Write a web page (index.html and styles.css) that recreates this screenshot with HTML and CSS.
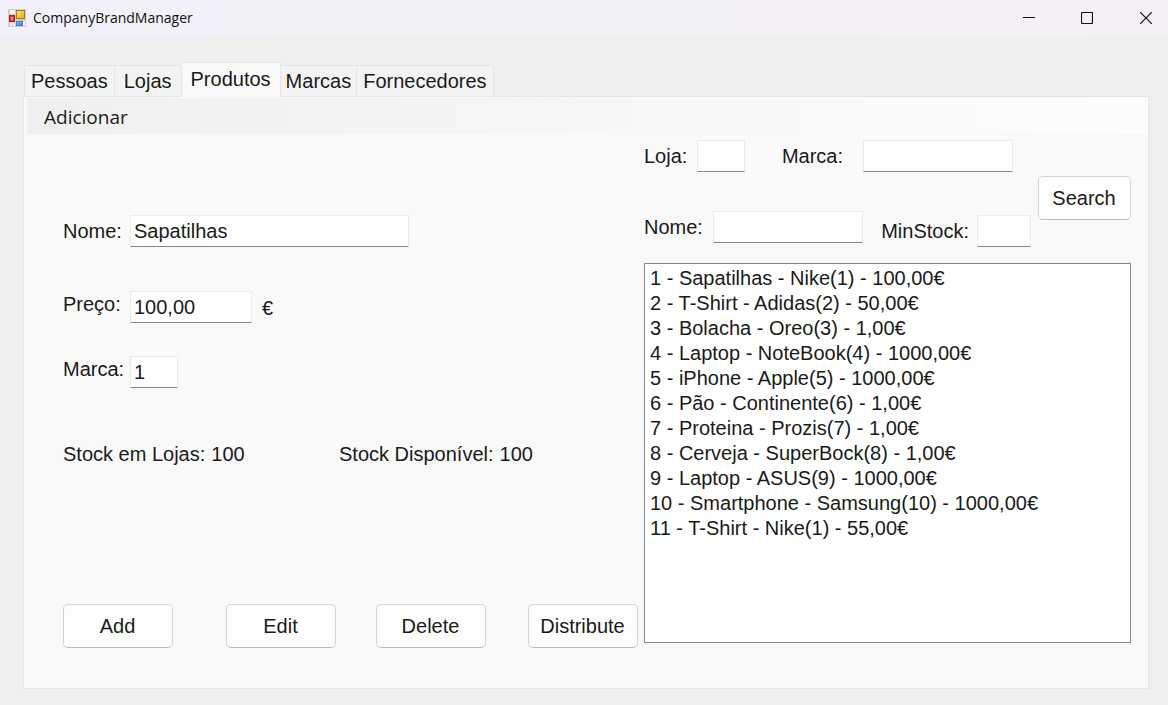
FILE: index.html
```html
<!DOCTYPE html>
<html lang="pt">
<head>
<meta charset="utf-8">
<title>CompanyBrandManager</title>
<link rel="stylesheet" href="styles.css">
</head>
<body>
<header class="titlebar">
  <svg class="app-icon" width="18" height="18" viewBox="0 0 18 18" aria-hidden="true">
    <defs>
      <linearGradient id="gold" x1="0" y1="0" x2="1" y2="1"><stop offset="0" stop-color="#ffe98a"/><stop offset="1" stop-color="#e9a800"/></linearGradient>
      <linearGradient id="blue" x1="0" y1="0" x2="1" y2="1"><stop offset="0" stop-color="#8dbcff"/><stop offset="1" stop-color="#3a74d8"/></linearGradient>
    </defs>
    <rect width="18" height="18" fill="#cfcdd0"/>
    <rect x="2" y="1" width="5" height="4" fill="#f4f4f6"/>
    <rect x="2" y="14" width="2" height="3" fill="#f4f4f6"/>
    <rect x="5" y="14" width="2" height="3" fill="#f4f4f6"/>
    <rect x="15" y="12" width="2" height="5" fill="#f4f4f6"/>
    <rect x="8.500" y="1.500" width="8" height="8" fill="url(#gold)" stroke="#b07a10"/>
    <rect x="1.500" y="6.500" width="5" height="6" fill="#d03a30" stroke="#a02a22"/>
    <rect x="3" y="8" width="2" height="3" fill="#e98a80"/>
    <rect x="8.500" y="12.500" width="6" height="4" fill="url(#blue)" stroke="#4a7cd0"/>
  </svg>
  <h1 class="titlebar-text">CompanyBrandManager</h1>
  <div class="window-controls">
    <button class="window-button" aria-label="Minimize"><svg width="12" height="12" viewBox="0 0 12 12"><path d="M0 5.500H12" stroke="#111"/></svg></button>
    <button class="window-button" aria-label="Maximize"><svg width="12" height="12" viewBox="0 0 12 12"><rect x=".5" y=".5" width="11" height="11" rx="1" fill="none" stroke="#111" stroke-width="1.200"/></svg></button>
    <button class="window-button" aria-label="Close"><svg width="12" height="12" viewBox="0 0 12 12"><path d="M0 0L12 12M12 0L0 12" stroke="#111" stroke-width="1.200"/></svg></button>
  </div>
</header>
<main class="content">
  <nav class="tabs" role="tablist">
    <button class="tab" role="tab">Pessoas</button>
    <button class="tab tab-wide" role="tab">Lojas</button>
    <button class="tab tab-wide tab-selected" role="tab" aria-selected="true">Produtos</button>
    <button class="tab tab-compact" role="tab">Marcas</button>
    <button class="tab" role="tab">Fornecedores</button>
  </nav>
  <section class="panel" role="tabpanel">
    <div class="menubar"><button class="menu-item">Adicionar</button></div>
    <div class="workspace">
      <form class="product">
        <div class="field field-name">
          <label for="name">Nome:</label>
          <input class="box box-long" id="name" value="Sapatilhas">
        </div>
        <div class="field field-price">
          <label for="price">Preço:</label>
          <input class="box box-medium" id="price" value="100,00">
          <span class="unit">€</span>
        </div>
        <div class="field field-brand">
          <label for="brand">Marca:</label>
          <input class="box box-short" id="brand" value="1">
        </div>
        <div class="stock">
          <p class="stock-item"><span>Stock em Lojas:</span><output>100</output></p>
          <p class="stock-item"><span>Stock Disponível:</span><output>100</output></p>
        </div>
        <div class="actions">
          <button type="button" class="button">Add</button>
          <button type="button" class="button">Edit</button>
          <button type="button" class="button">Delete</button>
          <button type="button" class="button">Distribute</button>
        </div>
      </form>
      <section class="catalog">
        <form class="search">
          <div class="filters">
            <div class="filter-row">
              <div class="filter"><label for="f-store">Loja:</label><input class="box box-short" id="f-store"></div>
              <div class="filter filter-brand"><label for="f-brand">Marca:</label><input class="box box-filter" id="f-brand"></div>
            </div>
            <div class="filter-row filter-row-second">
              <div class="filter"><label for="f-name">Nome:</label><input class="box box-filter" id="f-name"></div>
              <div class="filter filter-stock"><label for="f-stock">MinStock:</label><input class="box box-stock" id="f-stock"></div>
            </div>
          </div>
          <button type="button" class="button button-search">Search</button>
        </form>
        <select class="list" size="14" aria-label="Produtos">
          <option>1 - Sapatilhas - Nike(1) - 100,00€</option>
          <option>2 - T-Shirt - Adidas(2) - 50,00€</option>
          <option>3 - Bolacha - Oreo(3) - 1,00€</option>
          <option>4 - Laptop - NoteBook(4) - 1000,00€</option>
          <option>5 - iPhone - Apple(5) - 1000,00€</option>
          <option>6 - Pão - Continente(6) - 1,00€</option>
          <option>7 - Proteina - Prozis(7) - 1,00€</option>
          <option>8 - Cerveja - SuperBock(8) - 1,00€</option>
          <option>9 - Laptop - ASUS(9) - 1000,00€</option>
          <option>10 - Smartphone - Samsung(10) - 1000,00€</option>
          <option>11 - T-Shirt - Nike(1) - 55,00€</option>
        </select>
      </section>
    </div>
  </section>
</main>
</body>
</html>
```
FILE: styles.css
```css
* {
  box-sizing: border-box;
}

body {
  margin: 0;
  min-height: 100vh;
  display: flex;
  flex-direction: column;
  background: #efefef;
  color: #1a1a1a;
  font: 20px/26px "Liberation Sans", Arial, sans-serif;
}

button,
input,
select {
  font: inherit;
  color: inherit;
  margin: 0;
}

p {
  margin: 0;
}

.titlebar {
  display: flex;
  align-items: center;
  height: 37px;
  padding: 0 0 2px 8px;
  background: linear-gradient(90deg, #f2f0f8, #f4f0f8 60%, #f7eff7);
}

.app-icon {
  margin-right: 7px;
}

.titlebar-text {
  margin: 0;
  font: 14px/20px "Open Sans", "Noto Sans", sans-serif;
  color: #111;
}

.window-controls {
  display: flex;
  margin-left: auto;
}

.window-button {
  display: flex;
  align-items: center;
  justify-content: center;
  width: 58px;
  height: 34px;
  padding: 0;
  border: 0;
  background: none;
}

.window-button:last-child {
  width: 44px;
  margin-left: 8px;
}

.content {
  flex: 1;
  display: flex;
  flex-direction: column;
  padding: 25px 19px 16px 23px;
}

.tabs {
  display: flex;
  align-items: flex-end;
  padding-left: 1px;
  height: 34px;
}

.tab {
  height: 31px;
  padding: 0 6px;
  border: 1px solid #e5e5e5;
  border-width: 1px 1px 0 0;
  background: #f3f3f3;
}

.tab:first-child {
  border-left-width: 1px;
}

.tab-wide {
  padding: 0 9px;
}

.tab-compact {
  padding: 0 5px;
}

.tab-selected {
  height: 35px;
  margin-bottom: -1px;
  padding-bottom: 3px;
  background: #f9f9f9;
  z-index: 1;
}

.panel {
  flex: 1;
  display: flex;
  flex-direction: column;
  border: 1px solid #e5e5e5;
  background: #f9f9f9;
}

.menubar {
  display: flex;
  align-items: center;
  height: 36px;
  margin: 1px 0 0 3px;
  padding: 2px 0 0 17px;
  background: linear-gradient(90deg, #f0f0f0, #fdfdfd);
}

.menu-item {
  padding: 0;
  border: 0;
  background: none;
  font: 19px/26px "Open Sans", "Noto Sans", sans-serif;
}

.workspace {
  flex: 1;
  display: grid;
  grid-template-columns: 1fr 487px;
  column-gap: 6px;
  padding: 6px 17px 40px 39px;
}

.product {
  display: flex;
  flex-direction: column;
  padding-top: 75px;
}

.field {
  display: grid;
  grid-template-columns: 67px auto auto;
  justify-content: start;
  align-items: start;
}

.field-name {
  align-items: center;
}

.field-price {
  margin-top: 44px;
}

.field-brand {
  margin-top: 31px;
}

.box {
  height: 32px;
  padding: 0 3px;
  border: 1px solid #ebebeb;
  border-bottom-color: #868686;
  border-radius: 1px;
  background: #fff;
  outline: 0;
}

.box-long {
  width: 279px;
}

.box-medium {
  width: 122px;
}

.box-short {
  width: 48px;
}

.box-filter {
  width: 150px;
}

.box-stock {
  width: 54px;
}

.unit {
  padding-left: 10px;
  line-height: 34px;
}

.stock {
  display: grid;
  grid-template-columns: 276px auto;
  margin-top: 53px;
}

.stock-item {
  display: flex;
  gap: 6px;
}

.actions {
  display: grid;
  grid-template-columns: 163fr 150fr 152fr 110px;
  margin-top: auto;
}

.button {
  width: 110px;
  height: 44px;
  padding: 0 1px 1px 0;
  border: 1px solid #d4d4d4;
  border-bottom-color: #bcbcbc;
  border-radius: 5px;
  background: #fdfdfd;
}

.button-search {
  width: 93px;
  margin-top: 36px;
}

.catalog {
  display: flex;
  flex-direction: column;
  padding-bottom: 5px;
}

.search {
  display: flex;
  justify-content: space-between;
  align-items: flex-start;
}

.filters {
  width: 387px;
}

.filter-row {
  display: flex;
  justify-content: space-between;
}

.filter-row-second {
  height: 36px;
  margin-top: 39px;
}

.filter {
  display: flex;
  align-items: center;
  align-self: flex-start;
  gap: 10px;
}

.filter-brand {
  gap: 20px;
  margin-right: 18px;
}

.filter-stock {
  align-self: flex-end;
  gap: 8px;
}

.list {
  flex: 1;
  width: 100%;
  margin-top: 16px;
  padding: 2px 3px;
  border: 1px solid #828790;
  border-radius: 0;
  background: #fff;
  overflow: hidden;
  outline: 0;
}

.list option {
  min-height: 25px;
  padding: 1px 2px;
}
```
